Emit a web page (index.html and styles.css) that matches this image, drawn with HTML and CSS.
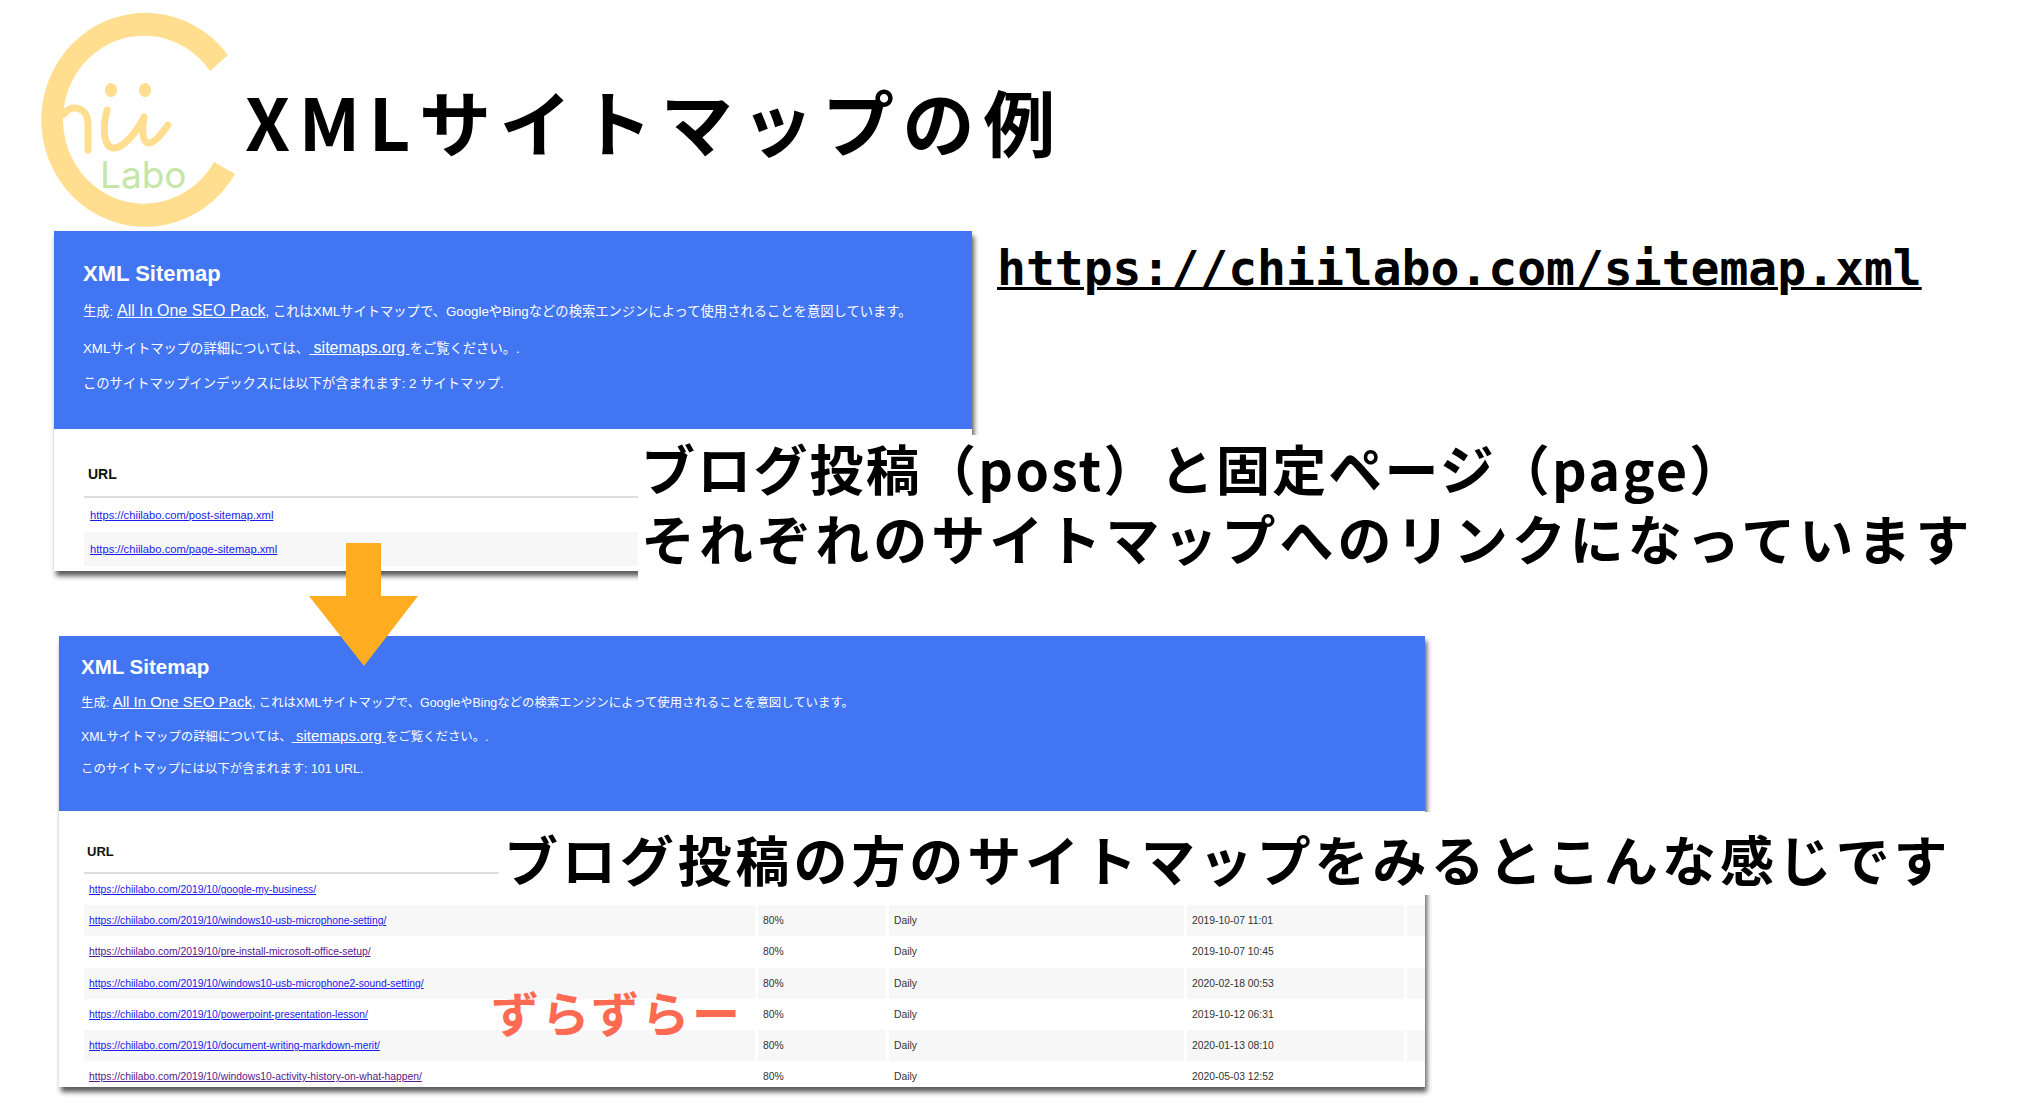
FILE: index.html
```html
<!DOCTYPE html>
<html lang="ja">
<head>
  <meta charset="UTF-8">
  <title>XMLサイトマップの例</title>
  <link rel="stylesheet" href="styles.css">
</head>
<body>
  <div class="slide">

    <svg class="logo" width="240" height="232" viewBox="0 0 240 232">
      <path d="M228 55A104 107 0 1 0 235 174L214 162A81 84 0 1 1 210 71Z" fill="#ffdf8f"/>
      <ellipse cx="111" cy="90" rx="6" ry="7" fill="#ffdf8f"/>
      <ellipse cx="145" cy="90" rx="6" ry="7" fill="#ffdf8f"/>
      <path d="M64 114C70 104 88 106 88 124V150" fill="none" stroke="#ffdf8f" stroke-width="7" stroke-linecap="round"/>
      <path d="M107 110C102 130 104 148 114 148C124 148 138 130 144 117C142 130 142 143 149 143C155 143 163 132 168 125" fill="none" stroke="#ffdf8f" stroke-width="7" stroke-linecap="round" stroke-linejoin="round"/>
      <text x="100" y="188" class="logo-text">Labo</text>
    </svg>

    <h1 class="title">XMLサイトマップの例</h1>

    <!-- top screenshot: sitemap index -->
    <div class="sheet sheet-index">
      <div class="sheet-head">
        <h2>XML Sitemap</h2>
        <p>生成: <a href="#">All In One SEO Pack</a>, これはXMLサイトマップで、GoogleやBingなどの検索エンジンによって使用されることを意図しています。</p>
        <p>XMLサイトマップの詳細については、<a href="#">&nbsp;sitemaps.org&nbsp;</a>をご覧ください。.</p>
        <p>このサイトマップインデックスには以下が含まれます: 2 サイトマップ.</p>
      </div>
      <table class="urls">
        <thead>
          <tr><th>URL</th></tr>
        </thead>
        <tbody>
          <tr><td><a href="#">https://chiilabo.com/post-sitemap.xml</a></td></tr>
          <tr><td><a href="#">https://chiilabo.com/page-sitemap.xml</a></td></tr>
        </tbody>
      </table>
    </div>

    <!-- bottom screenshot: post sitemap -->
    <div class="sheet sheet-posts">
      <div class="sheet-head">
        <h2>XML Sitemap</h2>
        <p>生成: <a href="#">All In One SEO Pack</a>, これはXMLサイトマップで、GoogleやBingなどの検索エンジンによって使用されることを意図しています。</p>
        <p>XMLサイトマップの詳細については、<a href="#">&nbsp;sitemaps.org&nbsp;</a>をご覧ください。.</p>
        <p>このサイトマップには以下が含まれます: 101 URL.</p>
      </div>
      <table class="urls">
        <colgroup>
          <col class="col-url"><col class="col-pri"><col class="col-freq"><col class="col-date"><col class="col-end">
        </colgroup>
        <thead>
          <tr><th colspan="5">URL</th></tr>
        </thead>
        <tbody>
          <tr><td colspan="5"><a href="#">https://chiilabo.com/2019/10/google-my-business/</a></td></tr>
          <tr><td><a href="#">https://chiilabo.com/2019/10/windows10-usb-microphone-setting/</a></td><td>80%</td><td>Daily</td><td>2019-10-07 11:01</td><td></td></tr>
          <tr><td><a class="seen" href="#">https://chiilabo.com/2019/10/pre-install-microsoft-office-setup/</a></td><td>80%</td><td>Daily</td><td>2019-10-07 10:45</td><td></td></tr>
          <tr><td><a href="#">https://chiilabo.com/2019/10/windows10-usb-microphone2-sound-setting/</a></td><td>80%</td><td>Daily</td><td>2020-02-18 00:53</td><td></td></tr>
          <tr><td><a href="#">https://chiilabo.com/2019/10/powerpoint-presentation-lesson/</a></td><td>80%</td><td>Daily</td><td>2019-10-12 06:31</td><td></td></tr>
          <tr><td><a href="#">https://chiilabo.com/2019/10/document-writing-markdown-merit/</a></td><td>80%</td><td>Daily</td><td>2020-01-13 08:10</td><td></td></tr>
          <tr><td><a class="seen" href="#">https://chiilabo.com/2019/10/windows10-activity-history-on-what-happen/</a></td><td>80%</td><td>Daily</td><td>2020-05-03 12:52</td><td></td></tr>
        </tbody>
      </table>
    </div>

    <svg class="arrow" width="110" height="124" viewBox="0 0 110 124">
      <path d="M37 0H72V53H109L55 123L0 53H37Z" fill="#ffad20"/>
    </svg>

    <a class="note note-url" href="#">https://chiilabo.com/sitemap.xml</a>

    <div class="note note-index">
      <div class="line-a">ブログ投稿（post）と固定ページ（page）</div>
      <div class="line-b">それぞれのサイトマップへのリンクになっています</div>
    </div>

    <div class="note note-posts">ブログ投稿の方のサイトマップをみるとこんな感じです</div>

    <div class="note note-red">ずらずらー</div>

  </div>
</body>
</html>
```

FILE: styles.css
```css
html, body {
  margin: 0;
  padding: 0;
  background-color: #fff;
}

.slide {
  position: relative;
  width: 2032px;
  height: 1114px;
  overflow: hidden;
  font-family: "Liberation Sans", "Noto Sans CJK JP", sans-serif;
}

.logo {
  position: absolute;
  left: 0;
  top: 0;
}

.logo-text {
  font-family: "Inter", sans-serif;
  font-weight: 400;
  font-size: 37px;
  fill: #c5e6a6;
}

.title {
  position: absolute;
  left: 245px;
  top: 72px;
  margin: 0;
  font-family: "Noto Sans CJK JP", sans-serif;
  font-size: 72px;
  line-height: 96px;
  font-weight: 700;
  letter-spacing: 8.6px;
  color: #000;
  white-space: nowrap;
}

/* the two pasted browser screenshots */
.sheet {
  position: absolute;
  background-color: #fff;
  overflow: hidden;
  box-shadow: 2px 5px 5px rgba(0, 0, 0, 0.65);
}

.sheet-index {
  left: 54px;
  top: 231px;
  width: 918px;
  height: 340px;
}

.sheet-posts {
  left: 59px;
  top: 636px;
  width: 1366px;
  height: 451px;
}

.sheet-head {
  box-sizing: border-box;
  background-color: #4175f2;
  color: #fff;
}

.sheet-head h2 {
  margin: 0;
  font-weight: 700;
}

.sheet-head p {
  margin: 0;
  line-height: 20px;
  white-space: nowrap;
}

.sheet-head a {
  color: #fff;
}

.sheet-index .sheet-head {
  height: 198px;
  padding: 29px 0 0 29px;
  font-size: 13.3px;
}

.sheet-index .sheet-head a {
  font-size: 16px;
}

.sheet-index .sheet-head h2 {
  font-size: 22px;
  line-height: 28px;
  margin-bottom: 13px;
}

.sheet-index .sheet-head p {
  margin-bottom: 15.5px;
}

.sheet-posts .sheet-head {
  height: 175px;
  padding: 19px 0 0 22px;
  font-size: 12.4px;
}

.sheet-posts .sheet-head a {
  font-size: 15px;
}

.sheet-posts .sheet-head h2 {
  font-size: 20.5px;
  line-height: 24px;
  margin-bottom: 13px;
}

.sheet-posts .sheet-head p {
  margin-bottom: 12.5px;
}

.urls {
  table-layout: fixed;
  border-collapse: separate;
  font-size: 11.2px;
  color: #333;
}

.urls th {
  text-align: left;
  font-size: 14px;
  line-height: 30px;
  color: #111;
  border-bottom: 2px solid #ddd;
}

.urls td {
  padding: 0 0 0 6px;
  white-space: nowrap;
  overflow: hidden;
}

.urls tbody tr:nth-child(even) td {
  background-color: #f7f7f7;
}

.urls a {
  color: #1a1aee;
}

.urls a.seen {
  color: #551a8b;
}

.sheet-index .urls {
  width: 860px;
  margin: 30px 0 0 30px;
  border-spacing: 0;
}

.sheet-index .urls th {
  padding: 0 0 7px 4px;
}

.sheet-index .urls td {
  height: 34px;
}

.sheet-posts .urls {
  width: 1344px;
  margin: 26px 0 0 22px;
  border-spacing: 3px 0;
  font-size: 10.35px;
}

.sheet-posts .urls th {
  padding: 0 0 5px 3px;
  font-size: 13px;
}

.sheet-posts .urls td {
  height: 31.2px;
  padding: 0 0 0 5px;
}

.col-url { width: 671px; }
.col-pri { width: 128px; }
.col-freq { width: 295px; }
.col-date { width: 217px; }
.col-end { width: 18px; }

.arrow {
  position: absolute;
  left: 309px;
  top: 543px;
}

/* captions laid over the screenshots */
.note {
  position: absolute;
  font-family: "Noto Sans CJK JP", sans-serif;
  font-weight: 700;
  color: #000;
  white-space: nowrap;
}

.note-url {
  left: 997px;
  top: 240px;
  font-family: "DejaVu Sans Mono", monospace;
  font-weight: 700;
  font-size: 48px;
  line-height: 56px;
  text-decoration: underline;
  text-decoration-thickness: 3px;
}

.note-index {
  left: 638px;
  top: 435px;
  width: 1380px;
  height: 150px;
  background-color: #fff;
  font-size: 54px;
  line-height: 70px;
  padding-left: 3px;
  box-sizing: border-box;
}

.line-a {
  margin-top: -2px;
  letter-spacing: 2.2px;
}

.line-b {
  letter-spacing: 4.05px;
}

.note-posts {
  left: 499px;
  top: 812px;
  width: 1452px;
  height: 83px;
  padding: 12px 0 0 5px;
  box-sizing: border-box;
  background-color: #fff;
  font-size: 54px;
  line-height: 70px;
  letter-spacing: 3.9px;
}

.note-red {
  left: 491px;
  top: 976px;
  font-size: 48px;
  line-height: 70px;
  font-weight: 700;
  color: #ff6b52;
  letter-spacing: 2.5px;
}
```
